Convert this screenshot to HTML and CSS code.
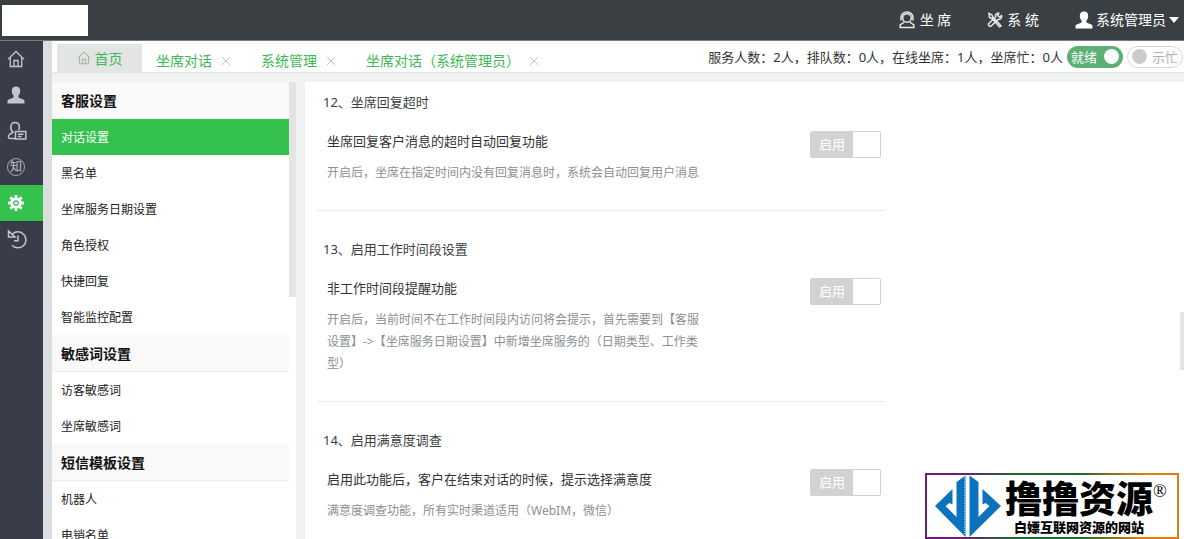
FILE: index.html
```html
<!DOCTYPE html>
<html lang="zh-CN">
<head>
<meta charset="utf-8">
<title>对话设置</title>
<link rel="stylesheet" href="styles.css">
</head>
<body>
<svg class="defs" aria-hidden="true">
  <symbol id="person" viewBox="0 0 18 18"><path d="M9 0.5c3 0 4.2 1.8 4.2 4.4 0 2.2-.8 3.600-1.800 4.600v2l4.800 1.900c1 .4 1.300 1 1.300 2V17.500H.5V15.400c0-1 .3-1.600 1.300-2l4.800-1.900v-2C5.600 8.500 4.800 7.100 4.800 4.900 4.800 2.300 6 .5 9 .5z" fill="currentColor"/></symbol>
  <symbol id="home" viewBox="0 0 18 18"><path d="M1 9.200 9 1.500l8 7.700M3.300 8v8.500h11.400V8M7 16.500v-6h4v6" fill="none" stroke="currentColor" stroke-width="1.300"/></symbol>
</svg>
<header class="topbar">
  <div class="brand"></div>
  <nav class="topnav">
    <a href="#" class="top-agent"><svg viewBox="0 0 18 18" width="18" height="18"><g fill="none" stroke="currentColor" stroke-width="1.500"><circle cx="9" cy="7" r="4.300"/><path d="M3 9.500V6.500a6 5.500 0 0 1 12 0v3M6.300 11 2.200 14v2.500h13.600V14l-4.100-3"/></g></svg>坐 席</a>
    <a href="#" class="top-system"><svg viewBox="0 0 16 16" width="16" height="16"><g fill="none" stroke="currentColor" stroke-width="1.500"><path d="M2 1.500 5 3l1 2.500 6.500 6.500 1.500 2-1.500.8L5 6.500 2.500 5.500z"/><path d="M14.500 3.500 12.500 5l-1.700-1.500.9-2.200C9.500 1 8 2.800 8.600 5L2 11.300c-1.500 1.600.8 4 2.500 2.400L11 7.300c2.300.6 4.200-1.300 3.500-3.800z"/></g></svg>系 统</a>
    <a href="#" class="top-user"><svg width="18" height="18"><use href="#person"/></svg>系统管理员<i class="caret"></i></a>
  </nav>
</header>
<div class="shell">
  <nav class="rail">
    <a href="#" aria-label="首页"><svg width="18" height="18"><use href="#home"/></svg></a>
    <a href="#" aria-label="客户"><svg width="18" height="18"><use href="#person"/></svg></a>
    <a href="#" aria-label="坐席"><svg viewBox="0 0 20 20" width="20" height="20"><g fill="none" stroke="currentColor" stroke-width="1.500"><path d="M8 17.500H3.200C1 17.500 1 14.500 2.500 13.500L6 11.300C2.200 8 3.500 1.500 8 1.500s5.300 4.500 3.500 7.500"/><path d="M8.500 10.500h10.300v7.500H8.500zM11 13.200h5.500M11 15.500h3.500"/></g></svg></a>
    <a href="#" aria-label="知识库"><span class="know">知</span></a>
    <a href="#" class="on" aria-label="设置"><svg viewBox="0 0 18 18" width="18" height="18"><path d="M9 1v16M1 9h16M3.300 3.300l11.400 11.400M14.700 3.300 3.300 14.700" stroke="currentColor" stroke-width="2.800"/><circle cx="9" cy="9" r="5.800" fill="currentColor"/><circle cx="9" cy="9" r="2.200" fill="none" stroke="#35c14e" stroke-width="1.300"/></svg></a>
    <a href="#" aria-label="历史"><svg viewBox="0 0 20 20" width="20" height="20"><path d="M5.500 5A8 8 0 1 1 5 16.200M1.500 2v6h6.500zM11 6.500v5.200H7" fill="none" stroke="currentColor" stroke-width="1.500"/></svg></a>
  </nav>
  <div class="work">
    <div class="tabbar">
      <a href="#" class="tab-home"><svg width="14" height="14"><use href="#home"/></svg>首页</a>
      <div class="tab"><a href="#">坐席对话</a><button type="button" aria-label="关闭"><svg viewBox="0 0 10 10" width="10" height="10"><path d="M1 1l8 8M9 1 1 9"/></svg></button></div>
      <div class="tab"><a href="#">系统管理</a><button type="button" aria-label="关闭"><svg viewBox="0 0 10 10" width="10" height="10"><path d="M1 1l8 8M9 1 1 9"/></svg></button></div>
      <div class="tab"><a href="#">坐席对话（系统管理员）</a><button type="button" aria-label="关闭"><svg viewBox="0 0 10 10" width="10" height="10"><path d="M1 1l8 8M9 1 1 9"/></svg></button></div>
      <div class="status">
        <span>服务人数：2人，排队数：0人，在线坐席：1人，坐席忙：0人</span>
        <label class="pill ready">就绪<input type="checkbox" checked></label>
        <label class="pill busy"><input type="checkbox">示忙</label>
      </div>
    </div>
    <div class="columns">
      <aside class="side">
        <div class="menu">
          <h2>客服设置</h2>
          <a href="#" class="current">对话设置</a>
          <a href="#">黑名单</a>
          <a href="#">坐席服务日期设置</a>
          <a href="#">角色授权</a>
          <a href="#">快捷回复</a>
          <a href="#">智能监控配置</a>
          <h2>敏感词设置</h2>
          <a href="#">访客敏感词</a>
          <a href="#">坐席敏感词</a>
          <h2>短信模板设置</h2>
          <a href="#">机器人</a>
          <a href="#">电销名单</a>
        </div>
        <div class="thumb"></div>
      </aside>
      <main class="main">
        <section>
          <h3>12、坐席回复超时</h3>
          <div class="row">
            <div class="desc"><p class="name">坐席回复客户消息的超时自动回复功能</p><p class="hint">开启后，坐席在指定时间内没有回复消息时，系统会自动回复用户消息</p></div>
            <label class="switch"><span>启用</span><input type="checkbox"></label>
          </div>
        </section>
        <section>
          <h3>13、启用工作时间段设置</h3>
          <div class="row">
            <div class="desc"><p class="name">非工作时间段提醒功能</p><p class="hint">开启后，当前时间不在工作时间段内访问将会提示，首先需要到【客服设置】-&gt;【坐席服务日期设置】中新增坐席服务的（日期类型、工作类型）</p></div>
            <label class="switch"><span>启用</span><input type="checkbox"></label>
          </div>
        </section>
        <section>
          <h3>14、启用满意度调查</h3>
          <div class="row">
            <div class="desc"><p class="name">启用此功能后，客户在结束对话的时候，提示选择满意度</p><p class="hint">满意度调查功能，所有实时渠道适用（WebIM，微信）</p></div>
            <label class="switch"><span>启用</span><input type="checkbox"></label>
          </div>
        </section>
      </main>
    </div>
  </div>
</div>
<div class="page-thumb"></div>
<div class="mark">
  <svg viewBox="0 0 66 62" width="66" height="62"><g fill="#0b72bd"><path d="M0 31 17.500 14v15.500l-3-1.500-4 3L21.500 42V7l9-6.500V62z"/><path d="M66 31 47.500 14v15.500l3-1.500 4 3L43.500 42V7l-9-6.500V62z"/></g><path d="M29.500 2v58" stroke="#fff" stroke-width=".6" stroke-dasharray="1 1"/></svg>
  <div class="mark-text"><strong>撸撸资源</strong><span>白嫖互联网资源的网站</span></div>
  <span class="reg">®</span>
</div>
</body>
</html>
```

FILE: styles.css
```css
* { box-sizing: border-box; }
body {
  margin: 0;
  height: 100vh;
  overflow: hidden;
  display: flex;
  flex-direction: column;
  font-family: "Noto Sans", "Noto Sans CJK SC", sans-serif;
  font-size: 13px;
  color: #3c3f42;
  background: #f1f3f3;
}
a { color: inherit; text-decoration: none; }
h2, h3, p { margin: 0; }
input { appearance: none; margin: 0; }
.defs { position: absolute; width: 0; height: 0; }

.topbar {
  flex: none;
  height: 41px;
  display: flex;
  justify-content: space-between;
  align-items: center;
  padding: 0 5px 0 2px;
  background: #3a3f44;
  border-bottom: 1px solid #77797c;
}
.brand { width: 86px; height: 31px; background: #fff; }
.topnav { display: flex; gap: 36px; color: #fff; font-size: 14px; line-height: 20px; }
.topnav a { display: flex; align-items: center; gap: 4px; }
.topnav svg { color: #e8e8e8; }
.topnav .top-user { gap: 3px; }
.topnav .top-user svg { color: #fff; }
.caret {
  border: 5px solid transparent;
  border-top: 6px solid #fff;
  border-bottom: 0;
}

.shell { flex: 1; min-height: 0; display: flex; }
.rail { flex: none; width: 43px; background: #393c49; color: #c6c6c8; }
.rail a { display: flex; align-items: center; height: 36px; padding-left: 7px; }
.rail .on { background: #35c14e; color: #fff; }
.know {
  width: 18px;
  height: 18px;
  border: 1px solid #a9aaae;
  border-radius: 50%;
  font-size: 12px;
  line-height: 15px;
  text-align: center;
}

.work {
  flex: 1;
  min-width: 0;
  display: flex;
  flex-direction: column;
  border-left: 9px solid #dcdedd;
}
.tabbar {
  flex: none;
  height: 32px;
  display: flex;
  align-items: center;
  gap: 30px;
  padding-left: 5px;
  background: #fff;
  border-bottom: 1px solid #e4e6e6;
  font-size: 14px;
  color: #3fb857;
}
.tab-home {
  display: flex;
  align-items: center;
  justify-content: center;
  gap: 4px;
  width: 85px;
  height: 28px;
  align-self: flex-end;
  margin-right: -16px;
  background: #e3e5e5;
}
.tab-home svg { color: #a5b5a8; }
.tab { display: flex; align-items: center; gap: 9px; line-height: 20px; padding-top: 9px; white-space: nowrap; }
.tab button { display: flex; padding: 0; border: 0; background: none; }
.tab svg { stroke: #c0c4c4; fill: none; }
.status {
  display: flex;
  align-items: center;
  gap: 4px;
  margin-left: auto;
  padding-right: 1px;
  font-size: 13px;
  color: #333;
  white-space: nowrap;
}
.pill {
  display: flex;
  align-items: center;
  justify-content: space-between;
  width: 56px;
  height: 22px;
  padding: 0 4px;
  border-radius: 11px;
}
.pill input { width: 15px; height: 15px; border-radius: 50%; }
.ready { background: #5cb074; color: #fff; }
.ready input { background: #fff; }
.busy { border: 1px solid #d8d8d8; color: #b0b0b0; }
.busy input { background: #ccc; }

.columns { flex: 1; min-height: 0; display: flex; gap: 9px; padding-top: 9px; }
.side { flex: none; width: 244px; display: flex; background: #fff; overflow: hidden; }
.menu { flex: 1; color: #222; }
.menu h2 {
  height: 37px;
  padding-left: 9px;
  border-bottom: 1px solid #eceeee;
  background: #f9f9f9;
  font-size: 14px;
  line-height: 37px;
  color: #111;
}
.menu a { display: block; height: 36px; padding-left: 9px; font-size: 12px; line-height: 38px; }
.menu .current { background: #35c14e; color: #fff; }
.thumb { width: 7px; height: 215px; background: #e3e5e4; }

.main { flex: 1; min-width: 0; padding: 0 12px; background: #fff; overflow: hidden; }
section { max-width: 568px; padding: 28px 4px 26px 6px; border-bottom: 1px solid #eceeee; }
section:first-child { padding-top: 10px; }
section:last-child { border-bottom: 0; }
h3 { font-size: 13px; font-weight: 400; line-height: 20px; }
.row { display: flex; justify-content: space-between; align-items: flex-start; padding: 19px 0 0 4px; }
.desc { max-width: 376px; }
.name { line-height: 20px; margin-bottom: 11px; color: #333; white-space: nowrap; }
.hint { font-size: 12px; line-height: 22px; color: #8c8f91; }
.switch {
  display: flex;
  width: 71px;
  height: 27px;
  border: 1px solid #d2d2d2;
  border-radius: 2px;
  background: #d2d2d2;
  color: #fff;
  line-height: 25px;
}
.switch span { flex: 1; text-align: center; }
.switch input { width: 27px; height: 25px; background: #fff; }

.page-thumb { position: absolute; right: 0; top: 312px; width: 4px; height: 58px; background: #e3e5e4; }
.mark {
  position: absolute;
  right: 5px;
  bottom: 0;
  width: 254px;
  height: 66px;
  display: flex;
  align-items: flex-start;
  padding-left: 8px;
  border: 2px solid;
  border-image: linear-gradient(90deg, #6b1f72 14%, #4a3a5c 22%, #1f6b2a 38%, #1f6b2a 62%, #e07d0c 85%) 1;
  background: #fff;
  color: #000;
}
.mark-text { display: flex; flex-direction: column; align-items: center; margin-left: 4px; padding-top: 4px; font-weight: 900; white-space: nowrap; }
.mark-text strong { font-size: 37px; line-height: 40px; font-weight: 900; }
.mark-text span { font-size: 13px; line-height: 16px; }
.reg { font: 18px/20px "Liberation Serif", serif; margin-top: 6px; }
```
